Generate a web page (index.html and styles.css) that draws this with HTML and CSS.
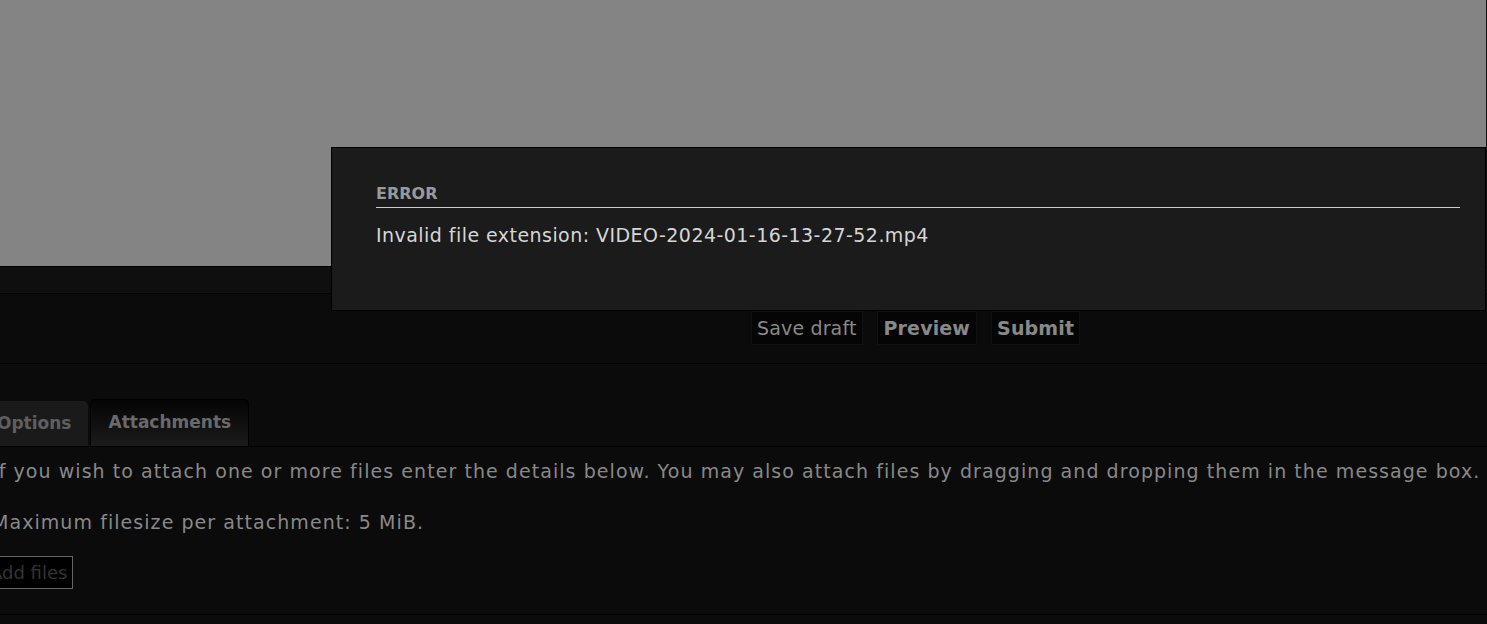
FILE: index.html
```html
<!DOCTYPE html>
<html lang="en">
<head>
<meta charset="utf-8">
<title>Attachments</title>
<link rel="stylesheet" href="styles.css">
</head>
<body>
<div class="shade"></div>
<div class="strip"></div>
<div class="actions">
  <button class="btn">Save draft</button>
  <button class="btn strong">Preview</button>
  <button class="btn strong">Submit</button>
</div>
<div class="panel">
  <div class="tabs">
    <div class="tab">Options</div>
    <div class="tab active">Attachments</div>
  </div>
  <div class="pane">
    <p class="line">If you wish to attach one or more files enter the details below. You may also attach files by dragging and dropping them in the message box.</p>
    <p class="line">Maximum filesize per attachment: 5 MiB.</p>
    <button class="add">Add files</button>
  </div>
</div>
<div class="dialog">
  <h3 class="dialog-title">ERROR</h3>
  <p class="dialog-msg">Invalid file extension: VIDEO-2024-01-16-13-27-52.mp4</p>
</div>
</body>
</html>
```

FILE: styles.css
```css
html, body {
  margin: 0;
  padding: 0;
}
body {
  background: #0b0b0b;
  font-family: "DejaVu Sans", Verdana, sans-serif;
  color: #8a8a8a;
  width: 1487px;
  height: 624px;
  overflow: hidden;
  position: relative;
}
.shade {
  height: 266px;
  background: #848484;
  border-bottom: 1px solid #000;
  border-right: 1px solid #111;
}
.strip {
  height: 26px;
  background: #0f0f0f;
  border-bottom: 1px solid #000;
}
.actions {
  display: flex;
  gap: 14px;
  padding: 17px 0 18px 751px;
  border-bottom: 1px solid #000;
}
.btn {
  font-family: "DejaVu Sans", sans-serif;
  font-size: 19px;
  letter-spacing: 0.15px;
  color: #888;
  background: #050505;
  border: 1px solid #111;
  padding: 4px 5px;
  height: 34px;
  line-height: 24px;
}
.btn.strong {
  font-weight: bold;
  padding: 4px 6px;
}
.btn.strong:last-child {
  padding: 4px 5px;
}
.panel {
  margin-left: -20px;
  padding-top: 35px;
}
.tabs {
  display: flex;
  align-items: flex-end;
  gap: 2px;
  border-bottom: 1px solid #000;
}
.tab {
  font-size: 17px;
  font-weight: bold;
  color: #5f5f5f;
  background: #1a1a1a;
  border-radius: 5px 5px 0 0;
  padding: 0 17px;
  height: 45px;
  line-height: 44px;
}
.tab.active {
  height: 46px;
  background: linear-gradient(#040404, #1b1b1b);
  border: 1px solid #000;
  border-bottom: 0;
  color: #6a6a6a;
}
.pane {
  padding: 12px 0 0 12px;
  border-bottom: 1px solid #000;
  height: 168px;
  box-sizing: border-box;
}
.line {
  margin: 0 0 26px;
  font-size: 19px;
  letter-spacing: 1.06px;
  line-height: 25px;
  color: #898989;
}
.line + .line {
  margin-bottom: 21px;
}
.add {
  font-family: "DejaVu Sans", sans-serif;
  font-size: 18px;
  color: #333;
  background: #000;
  border: 1px solid #666;
  padding: 5px 5px;
  margin-left: -8px;
}
.dialog {
  position: absolute;
  left: 331px;
  top: 147px;
  width: 1155px;
  height: 164px;
  box-sizing: border-box;
  padding: 36px 25px 0 44px;
  background: #1b1b1b;
  border: 1px solid #000;
}
.dialog-title {
  margin: 0;
  font-size: 16px;
  font-weight: bold;
  color: #999;
  border-bottom: 1px solid #ccc;
  padding-bottom: 4px;
  line-height: 19px;
}
.dialog-msg {
  margin: 16px 0 0;
  font-family: "DejaVu Sans", sans-serif;
  font-size: 19px;
  letter-spacing: 0.45px;
  color: #d6d6d6;
}
```
